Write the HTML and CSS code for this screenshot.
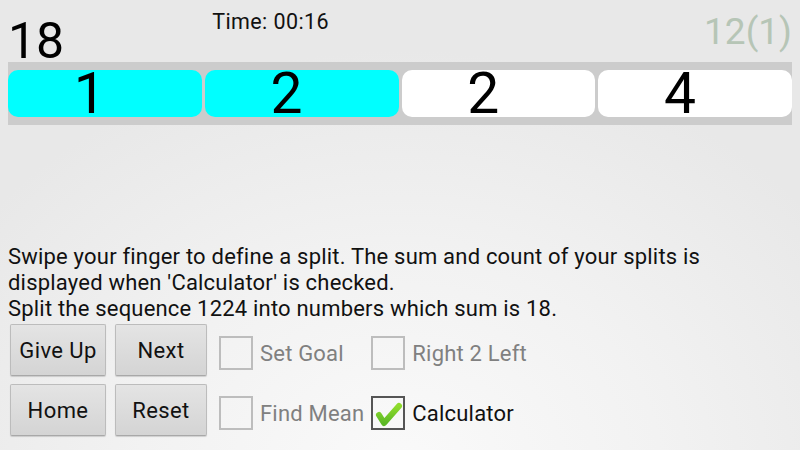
FILE: index.html
```html
<!DOCTYPE html>
<html>
<head>
<meta charset="utf-8">
<link rel="stylesheet" href="styles.css">
</head>
<body>
<div class="app">
  <header class="header">
    <div class="goal">18</div>
    <div class="timer">Time: 00:16</div>
    <div class="count">12(1)</div>
  </header>
  <div class="bar">
    <div class="cell on">1</div>
    <div class="cell on">2</div>
    <div class="cell">2</div>
    <div class="cell">4</div>
  </div>
  <p class="info">Swipe your finger to define a split. The sum and count of your splits is displayed when 'Calculator' is checked.<br>Split the sequence 1224 into numbers which sum is 18.</p>
  <div class="controls">
    <button class="btn c1">Give Up</button>
    <button class="btn c2">Next</button>
    <label class="chk c3"><span class="box"></span><span class="lbl">Set Goal</span></label>
    <label class="chk c4"><span class="box"></span><span class="lbl">Right 2 Left</span></label>
    <button class="btn c1">Home</button>
    <button class="btn c2">Reset</button>
    <label class="chk c3"><span class="box"></span><span class="lbl">Find Mean</span></label>
    <label class="chk c4 checked"><span class="box"><svg viewBox="0 0 34 34" width="34" height="34"><defs><linearGradient id="g" x1="0" y1="0" x2="0" y2="1"><stop offset="0" stop-color="#8fdc2c"/><stop offset="1" stop-color="#5cb826"/></linearGradient></defs><path d="M8 19 L13 27 L28 10" fill="none" stroke="url(#g)" stroke-width="6" stroke-linecap="round" stroke-linejoin="round"/></svg></span><span class="lbl">Calculator</span></label>
  </div>
</div>
</body>
</html>
```
FILE: styles.css
```css
html, body {
  margin: 0;
  padding: 0;
}
body {
  width: 800px;
  height: 450px;
  overflow: hidden;
  font-family: Roboto, "Noto Sans", sans-serif;
  color: #111;
  background: radial-gradient(ellipse 520px 420px at 400px 470px, #fafafa 0%, #f2f2f2 50%, #e8e8e8 100%);
  background-color: #e8e8e8;
}
.app {
  padding: 0 8px;
}
.header {
  display: flex;
  align-items: flex-start;
  height: 62px;
}
.goal {
  font-size: 50px;
  line-height: 50px;
  margin-top: 16px;
  color: #000;
}
.timer {
  font-size: 21.5px;
  line-height: 22px;
  letter-spacing: 0.4px;
  margin-top: 11px;
  margin-left: 148px;
  color: #111;
}
.count {
  margin-left: auto;
  font-size: 37px;
  line-height: 37px;
  margin-top: 13px;
  color: #b6c5b6;
}
.bar {
  display: flex;
  gap: 3px;
  padding: 8px 0;
  background: #cccccc;
}
.cell {
  flex: 1;
  height: 47px;
  line-height: 47px;
  border-radius: 10px;
  background: #ffffff;
  text-align: center;
  font-size: 57px;
  color: #000;
  padding-right: 30px;
}
.cell.on {
  background: #00ffff;
}
.info {
  margin: 119px 0 0;
  font-size: 22px;
  line-height: 26px;
  letter-spacing: 0.2px;
  color: #111;
}
.controls {
  display: grid;
  grid-template-columns: 96px 101px max-content max-content;
  grid-auto-rows: 52px;
  row-gap: 8px;
  margin-top: 2px;
  margin-left: 2px;
}
.btn {
  font-family: Roboto, "Noto Sans", sans-serif;
  font-size: 22px;
  letter-spacing: 0.4px;
  color: #111;
  border: 1px solid #bcbcbc;
  border-bottom-color: #a8a8a8;
  border-radius: 2px;
  background: linear-gradient(#e4e4e4, #d4d4d4);
  box-shadow: 0 1px 1px rgba(0,0,0,0.15);
  padding: 0;
  height: 52px;
}
.c2 {
  margin-left: 9px;
}
.chk {
  display: flex;
  align-items: center;
  align-self: center;
  margin-top: 6px;
  font-size: 22px;
  letter-spacing: 0.2px;
  color: #808080;
}
.c3 {
  margin-left: 12px;
}
.c4 {
  margin-left: 7px;
}
.box {
  width: 30px;
  height: 30px;
  border: 2px solid #bdbdbd;
  margin-right: 7px;
  position: relative;
}
.box svg {
  position: absolute;
  left: -2px;
  top: -2px;
}
.checked .box {
  border-color: #555;
}
.checked .lbl {
  color: #111;
}
```
